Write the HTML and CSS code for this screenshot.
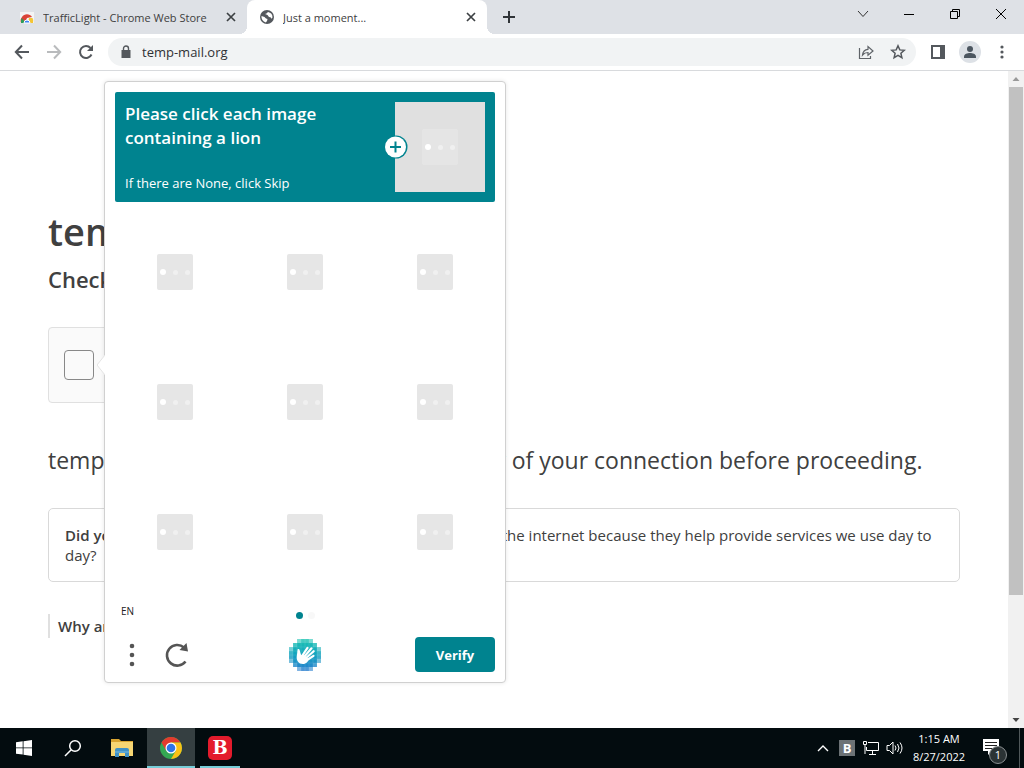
FILE: index.html
```html
<!DOCTYPE html>
<html lang="en">
<head>
<meta charset="UTF-8">
<meta name="viewport" content="width=device-width, initial-scale=1.0">
<title>Just a moment...</title>
<link rel="stylesheet" href="styles.css">
</head>
<body>
<div class="desktop">

  <!-- Tab strip -->
  <header class="tabstrip">
    <div class="tab">
      <svg class="favicon" width="16" height="16" viewBox="0 0 16 16">
        <path d="M1 3h14v11H1z" fill="#f4f4f4"/>
        <path d="M5 1h6v2H5z" fill="#e3e3e3"/>
        <path d="M2 14a6 6 0 0 1 1-6 6 6 0 0 1 10 0l-5 1-2 5z" fill="#db4437"/>
        <path d="M9 14l1-5h3.500a6 6 0 0 1 .5 5z" fill="#f4c534"/>
        <path d="M2 14a6 6 0 0 1 .8-5L7 14z" fill="#2f9d57"/>
        <path d="M5 14a3 3 0 0 1 6 0z" fill="#4285f4" stroke="#fff"/>
      </svg>
      <span class="tab-title">TrafficLight - Chrome Web Store</span>
      <button class="tab-close" aria-label="Close tab">
        <svg width="16" height="16" viewBox="0 0 16 16"><path d="M4 4l8 8M12 4l-8 8" stroke="#3c4043" stroke-width="1.700"/></svg>
      </button>
    </div>
    <div class="tab tab-active">
      <svg class="favicon" width="16" height="16" viewBox="0 0 16 16">
        <circle cx="8" cy="8" r="7" fill="#54585d"/>
        <path d="M2.500 7l3 1 1.500 1.500 1.500.5-.5 2-1.200 1.500A5.800 5.800 0 0 1 2.500 7z" fill="#fff"/>
        <path d="M9 3L7.500 4.500l-1.500.5 2.500 1 1.500 1.900 1.500.3 1 1.600 1-1.400A5.500 5.500 0 0 0 9 3z" fill="#fff"/>
      </svg>
      <span class="tab-title">Just a moment...</span>
      <button class="tab-close" aria-label="Close tab">
        <svg width="16" height="16" viewBox="0 0 16 16"><path d="M4 4l8 8M12 4l-8 8" stroke="#3c4043" stroke-width="1.700"/></svg>
      </button>
    </div>
    <button class="new-tab" aria-label="New tab">
      <svg width="14" height="14" viewBox="0 0 14 14"><path d="M7 1v12M1 7h12" stroke="#303438" stroke-width="2"/></svg>
    </button>
    <div class="window-controls">
      <button aria-label="Search tabs"><svg width="12" height="12" viewBox="0 0 12 12"><path d="M1 3l5 5.500L11 3" fill="none" stroke="#333"/></svg></button>
      <button aria-label="Minimize"><svg width="12" height="12" viewBox="0 0 12 12"><path d="M1 6.500h10" stroke="#000"/></svg></button>
      <button aria-label="Restore"><svg width="12" height="12" viewBox="0 0 12 12"><path d="M1.500 3.500h7v7h-7zM3.500 3.500v-2h7v7h-2" fill="none" stroke="#000"/></svg></button>
      <button aria-label="Close"><svg width="12" height="12" viewBox="0 0 12 12"><path d="M1 1l10 10M11 1L1 11" stroke="#000"/></svg></button>
    </div>
  </header>

  <!-- Toolbar -->
  <nav class="toolbar">
    <button class="tool" aria-label="Back"><svg width="16" height="16" viewBox="0 0 16 16"><path d="M15 8H2M8 1.500L1.800 8 8 14.500" fill="none" stroke="#54585d" stroke-width="2"/></svg></button>
    <button class="tool" aria-label="Forward"><svg width="16" height="16" viewBox="0 0 16 16"><path d="M1 8h13M8 1.500L14.200 8 8 14.500" fill="none" stroke="#b9bbbd" stroke-width="2"/></svg></button>
    <button class="tool" aria-label="Reload"><svg width="16" height="16" viewBox="0 0 16 16"><path d="M13.500 10.500A6 6 0 1 1 12.500 4" fill="none" stroke="#54585d" stroke-width="2"/><path d="M15 1v6H9z" fill="#54585d"/></svg></button>
    <div class="omnibox">
      <svg width="12" height="14" viewBox="0 0 12 14"><path d="M1.500 5h9v8h-9z" fill="#54585d"/><path d="M3.500 6V3.500a2.500 2.500 0 0 1 5 0V6" fill="none" stroke="#54585d" stroke-width="1.400"/></svg>
      <input class="url" type="text" value="temp-mail.org" aria-label="Address">
      <button class="tool" aria-label="Share"><svg width="16" height="16" viewBox="0 0 16 16"><path d="M1.500 4v10.500h11V12M4.500 11c.4-4 2.500-5.500 5.500-5.700V2.500L15 7l-5 4.300V8.500c-2.500 0-4 .7-5.500 2.500z" fill="none" stroke="#5f6368" stroke-width="1.200"/></svg></button>
      <button class="tool" aria-label="Bookmark"><svg width="16" height="16" viewBox="0 0 16 16"><path d="M8 1.800l1.800 4.100 4.500.4-3.400 3 1 4.400L8 11.400l-3.900 2.300 1-4.400-3.400-3 4.500-.4z" fill="none" stroke="#54585d" stroke-width="1.500"/></svg></button>
    </div>
    <button class="tool" aria-label="Side panel"><svg width="16" height="16" viewBox="0 0 16 16"><path d="M2 2h12v12H2z" fill="none" stroke="#54585d" stroke-width="2"/><path d="M10 2h4v12h-4z" fill="#54585d"/></svg></button>
    <button class="tool" aria-label="Profile"><svg width="22" height="22" viewBox="0 0 22 22"><circle cx="11" cy="11" r="11" fill="#dde1e6"/><circle cx="11" cy="8" r="3" fill="#4c5660"/><path d="M5 17v-1.500C5 13 8.500 12 11 12s6 1 6 3.500V17z" fill="#4c5660"/></svg></button>
    <button class="tool" aria-label="Menu"><svg width="4" height="16" viewBox="0 0 4 16"><circle cx="2" cy="3" r="1.600" fill="#54585d"/><circle cx="2" cy="8" r="1.600" fill="#54585d"/><circle cx="2" cy="13" r="1.600" fill="#54585d"/></svg></button>
  </nav>

  <div class="viewport">
    <main class="page">
      <h1>temp-mail.org</h1>
      <h2>Checking if the site connection is secure</h2>
      <div class="widget">
        <input type="checkbox" id="human" class="human-check">
        <label for="human">I am human</label>
      </div>
      <p class="lead">temp-mail.org needs to review the security of your connection before proceeding.</p>
      <p class="fact"><strong>Did you know</strong> not all bots are bad? Some bots are essential to the internet because they help provide services we use day to day?</p>
      <p class="why">Why am I seeing this page?</p>

      <!-- Challenge popup -->
      <section class="challenge">
        <svg class="pointer" width="8" height="20" viewBox="0 0 8 20"><path d="M8 0L0 10l8 10z" fill="#fff"/><path d="M8 0L0 10l8 10" fill="none" stroke="#e4e4e4"/></svg>
        <div class="prompt">
          <div class="prompt-text">
            <h3>Please click each image containing a lion</h3>
            <p>If there are None, click Skip</p>
          </div>
          <div class="example">
            <div class="loader"><i></i><i></i><i></i></div>
            <svg class="plus" width="24" height="24" viewBox="0 0 24 24"><circle cx="12" cy="12" r="11.500" fill="#00838f"/><circle cx="11.500" cy="12" r="10.500" fill="#fff"/><path d="M11.500 6.500v11M6 12h11" stroke="#00838f" stroke-width="2"/></svg>
          </div>
        </div>
        <div class="tiles">
          <div class="tile"><div class="loader"><i></i><i></i><i></i></div></div>
          <div class="tile"><div class="loader"><i></i><i></i><i></i></div></div>
          <div class="tile"><div class="loader"><i></i><i></i><i></i></div></div>
          <div class="tile"><div class="loader"><i></i><i></i><i></i></div></div>
          <div class="tile"><div class="loader"><i></i><i></i><i></i></div></div>
          <div class="tile"><div class="loader"><i></i><i></i><i></i></div></div>
          <div class="tile"><div class="loader"><i></i><i></i><i></i></div></div>
          <div class="tile"><div class="loader"><i></i><i></i><i></i></div></div>
          <div class="tile"><div class="loader"><i></i><i></i><i></i></div></div>
        </div>
        <div class="status">
          <button class="lang">EN</button>
          <div class="crumbs"><i class="on"></i><i></i></div>
        </div>
        <div class="actions">
          <div class="left-actions">
            <button aria-label="More"><svg width="6" height="24" viewBox="0 0 6 24"><circle cx="3" cy="3" r="2.300" fill="#555"/><circle cx="3" cy="12" r="2.300" fill="#555"/><circle cx="3" cy="21" r="2.300" fill="#555"/></svg></button>
            <button aria-label="Refresh"><svg width="24" height="26" viewBox="0 0 24 26"><path d="M20.500 19.500A10.300 10.300 0 1 1 19 5.500" fill="none" stroke="#555" stroke-width="2.600"/><path d="M21.500 1l1.500 8.500-8.500-1.500z" fill="#555"/></svg></button>
          </div>
          <svg width="32" height="32" viewBox="0 0 32 32">
            <defs>
              <linearGradient id="aqua" x1="0" y1="0" x2="0" y2="1">
                <stop offset="0" stop-color="#1fc5b3"/>
                <stop offset=".5" stop-color="#12a2bf"/>
                <stop offset="1" stop-color="#2c7fd0"/>
              </linearGradient>
            </defs>
            <path d="M8 0h16v4h4v4h4v16h-4v4h-4v4H8v-4H4v-4H0V8h4V4h4z" fill="url(#aqua)"/>
            <path d="M8 0h4v4H8zM20 0h4v4h-4zM0 8h4v4H0zM28 8h4v4h-4zM0 20h4v4H0zM28 20h4v4h-4zM8 28h4v4H8zM20 28h4v4h-4z" fill="#fff" opacity=".4"/>
            <path d="M0 12h4v8H0zM28 12h4v8h-4zM12 0h8v4h-8zM12 28h8v4h-8zM4 4h4v4H4zM24 4h4v4h-4zM4 24h4v4H4zM24 24h4v4h-4z" fill="#fff" opacity=".18"/>
            <path d="M8 0v32M16 0v32M24 0v32M4 4v24M12 0v32M20 0v32M28 4v24M0 8h32M0 16h32M0 24h32M0 12h32M0 20h32" stroke="#fff" stroke-width=".5" opacity=".2"/>
            <path d="M9.500 11l2 7M13 17l5.500-8.200M15 18l7.500-8.700M17 19l7.700-6.800M18 21l6.500-4.200" stroke="#fff" stroke-width="2.200" stroke-linecap="round"/>
            <path d="M8.500 11.500l3.500 5 2-1 5.500 4.500c0 2.500-2.500 5-5.500 5-4.500 0-6.500-3.500-6.300-7z" fill="#fff"/>
          </svg>
          <button class="verify">Verify</button>
        </div>
      </section>
    </main>
    <div class="scrollbar">
      <svg width="16" height="16" viewBox="0 0 16 16"><path d="M4.500 10L8 6l3.500 4z" fill="#999"/></svg>
      <div class="thumb"></div>
      <svg width="16" height="16" viewBox="0 0 16 16"><path d="M4.500 6L8 10l3.500-4z" fill="#444"/></svg>
    </div>
  </div>

  <!-- Windows taskbar -->
  <footer class="taskbar">
    <div class="apps">
      <button aria-label="Start"><svg width="16" height="16" viewBox="0 0 16 16"><path d="M0 2.200L6.700 1.300v6.200H0zM7.500 1.200L16 0v7.500H7.500zM0 8.300h6.700v6.300L0 13.700zM7.500 8.300H16V16l-8.500-1.200z" fill="#fff"/></svg></button>
      <button aria-label="Search"><svg width="18" height="18" viewBox="0 0 18 18"><circle cx="11" cy="7" r="5.300" fill="none" stroke="#fff" stroke-width="1.500"/><path d="M7.200 10.800L1 17" stroke="#fff" stroke-width="1.500"/></svg></button>
      <button aria-label="File Explorer"><svg width="22" height="20" viewBox="0 0 22 20"><path d="M0 1h8l2 2h12v5H0z" fill="#d9a531"/><path d="M0 4h22v14H0z" fill="#f6d673"/><path d="M4 19v-7q0-2 2-2h10q2 0 2 2v7h-4v-4H8v4z" fill="#3f91c6"/><path d="M4 14h14" stroke="#7bbbe0"/></svg></button>
      <button class="open focused" aria-label="Google Chrome"><svg width="24" height="24" viewBox="0 0 24 24"><circle cx="12" cy="12" r="11" fill="#34a853"/><path d="M2.500 6.500A11 11 0 0 1 21.500 6.500H12L7.200 14.700z" fill="#e33b2e"/><path d="M12 6.500h9.500A11 11 0 0 1 12 23l4.800-8.200z" fill="#fbc116"/><circle cx="12" cy="12" r="5.500" fill="#fff"/><circle cx="12" cy="12" r="4.300" fill="#2f74e8"/></svg></button>
      <button class="open" aria-label="Bitdefender"><span class="bd">B</span></button>
    </div>
    <div class="tray">
      <button aria-label="Hidden icons"><svg width="12" height="8" viewBox="0 0 12 8"><path d="M1 7l5-5 5 5" fill="none" stroke="#fff" stroke-width="1.400"/></svg></button>
      <button aria-label="Bitdefender tray"><span class="bd-small">B</span></button>
      <button aria-label="Network"><svg width="18" height="16" viewBox="0 0 18 16"><path d="M6 2.500h10.500v8H4.500V7M10.500 10.500v4M7 14.500h7M1.500 1.500h3v3h-3zM3 4.500V14" fill="none" stroke="#fff"/></svg></button>
      <button aria-label="Volume"><svg width="18" height="16" viewBox="0 0 18 16"><path d="M1 5.500h2.500L7 2v12l-3.500-3.500H1zM9 5.500q2 2.500 0 5M11.500 4q3 4 0 8M14 2.500q4 5.500 0 11" fill="none" stroke="#fff"/></svg></button>
      <div class="clock"><span>1:15 AM</span><span>8/27/2022</span></div>
      <button class="notif" aria-label="Notifications">
        <svg width="24" height="24" viewBox="0 0 24 24"><path d="M0 3h16v12H9l-4 4v-4H0z" fill="#fff"/><path d="M2 6.500h12M2 9.500h12M2 12.500h8" stroke="#222"/></svg>
        <span class="badge">1</span>
      </button>
      <div class="peek"></div>
    </div>
  </footer>
</div>
</body>
</html>
```

FILE: styles.css
```css
* {
  box-sizing: border-box;
}
body {
  margin: 0;
  font-family: "Open Sans", "Noto Sans", sans-serif;
  color: #404040;
}
h1, h2, h3, p {
  margin: 0;
}
button {
  display: flex;
  align-items: center;
  justify-content: center;
  padding: 0;
  border: 0;
  background: none;
  font-family: inherit;
}
svg {
  display: block;
  flex: none;
}
.desktop {
  display: flex;
  flex-direction: column;
  height: 100vh;
  overflow: hidden;
}

/* tabs */
.tabstrip {
  display: flex;
  flex: none;
  height: 34px;
  padding-left: 7px;
  background: #dee1e6;
}
.tab {
  display: flex;
  align-items: center;
  gap: 8px;
  width: 240px;
  padding: 0 8px 0 12px;
  font-size: 11px;
}
.tab-active {
  position: relative;
  background: #fff;
  border-radius: 8px 8px 0 0;
}
.tab-active::before,
.tab-active::after {
  content: "";
  position: absolute;
  bottom: 0;
  width: 8px;
  height: 8px;
}
.tab-active::before {
  right: 100%;
  background: radial-gradient(circle at 0 0, #dee1e6 8px, #fff 8px);
}
.tab-active::after {
  left: 100%;
  background: radial-gradient(circle at 100% 0, #dee1e6 8px, #fff 8px);
}
.tab-title {
  flex: 1;
  white-space: nowrap;
  overflow: hidden;
}
.tab-close {
  width: 16px;
  height: 16px;
}
.new-tab {
  width: 28px;
  margin-left: 8px;
}
.window-controls {
  display: flex;
  height: 28px;
  margin-left: auto;
}
.window-controls button {
  width: 46px;
}

/* toolbar */
.toolbar {
  display: flex;
  flex: none;
  align-items: center;
  gap: 4px;
  height: 37px;
  padding: 0 8px;
  background: #fff;
  border-bottom: 1px solid #d8dadd;
}
.tool {
  flex: none;
  width: 28px;
  height: 28px;
}
.omnibox {
  display: flex;
  flex: 1;
  align-items: center;
  gap: 4px;
  height: 28px;
  margin: 0 4px;
  padding: 0 4px 0 12px;
  border-radius: 14px;
  background: #f1f3f4;
}
.url {
  flex: 1;
  min-width: 0;
  padding: 0 6px;
  border: 0;
  outline: 0;
  background: none;
  font-family: inherit;
  font-size: 13px;
  color: #303134;
}

/* page */
.viewport {
  display: flex;
  flex: 1;
  min-height: 0;
  background: #fff;
}
.page {
  position: relative;
  flex: 1;
  padding: 130px 48px 0;
}
h1 {
  font-size: 38px;
  font-weight: 600;
  line-height: 60px;
}
h2 {
  font-size: 22px;
  font-weight: 600;
  line-height: 36px;
}
.widget {
  display: flex;
  align-items: center;
  gap: 16px;
  width: 300px;
  height: 76px;
  margin: 30px 0 40px;
  padding: 0 15px;
  border: 1px solid #e0e0e0;
  border-radius: 4px;
  background: #fafafa;
  font-size: 14px;
}
.human-check {
  appearance: none;
  width: 30px;
  height: 30px;
  margin: 0;
  border: 1px solid #888;
  border-radius: 4px;
  background: #fafafa;
}
.lead {
  font-size: 23px;
  line-height: 34px;
}
.fact {
  margin: 31px 0 32px;
  padding: 16px;
  border: 1px solid #d9d9d9;
  border-radius: 5px;
  font-size: 15px;
  line-height: 20px;
}
.fact strong,
.why {
  font-weight: 600;
}
.why {
  padding-left: 8px;
  border-left: 2px solid #e0e0e0;
  font-size: 15px;
  line-height: 24px;
}

/* challenge popup */
.challenge {
  position: absolute;
  top: 10px;
  left: 104px;
  width: 402px;
  padding: 10px;
  border: 1px solid #d0d0d0;
  border-radius: 4px;
  background: #fff;
  box-shadow: 0 0 4px rgba(0, 0, 0, 0.1);
}
.pointer {
  position: absolute;
  top: 273px;
  left: -8px;
}
.prompt {
  display: flex;
  justify-content: space-between;
  height: 110px;
  padding: 10px;
  border-radius: 2px;
  background: #00838f;
  color: #fff;
}
.prompt-text {
  display: flex;
  flex-direction: column;
  justify-content: space-between;
  width: 220px;
}
.prompt h3 {
  font-size: 17px;
  font-weight: 600;
  line-height: 24px;
}
.prompt p {
  font-size: 13px;
  line-height: 18px;
}
.example {
  position: relative;
  display: flex;
  align-items: center;
  justify-content: center;
  width: 90px;
  background: #e0e0e0;
}
.plus {
  position: absolute;
  top: 33px;
  left: -11px;
}
.tiles {
  display: grid;
  grid-template-columns: repeat(3, 1fr);
  grid-auto-rows: 120px;
  gap: 10px;
  margin-top: 10px;
}
.tile {
  display: flex;
  align-items: center;
  justify-content: center;
}
.loader {
  display: flex;
  align-items: center;
  justify-content: space-between;
  width: 36px;
  height: 36px;
  padding: 0 3px;
  border-radius: 2px;
  background: #e6e6e6;
}
.loader i {
  width: 5px;
  height: 5px;
  border-radius: 50%;
  background: #f0f0f0;
}
.loader i:first-child {
  width: 6px;
  height: 6px;
  background: #fff;
}
.example .loader {
  background: #e5e5e5;
}
.status {
  display: grid;
  grid-template-columns: 1fr auto 1fr;
  align-items: end;
  height: 40px;
  padding: 0 6px 13px;
}
.lang {
  justify-self: start;
  font-size: 10px;
  line-height: 16px;
  color: #222;
}
.crumbs {
  display: flex;
  gap: 5px;
}
.crumbs i {
  width: 7px;
  height: 7px;
  border-radius: 50%;
  background: #f8f8f8;
}
.crumbs .on {
  background: #00838f;
}
.actions {
  display: grid;
  grid-template-columns: 1fr auto 1fr;
  align-items: center;
  margin-top: 5px;
}
.left-actions {
  display: flex;
  gap: 30px;
  padding-left: 14px;
}
.verify {
  justify-self: end;
  width: 80px;
  height: 35px;
  border-radius: 4px;
  background: #00838f;
  color: #fff;
  font-size: 13px;
  font-weight: 700;
}

/* page scrollbar */
.scrollbar {
  display: flex;
  flex-direction: column;
  width: 16px;
  background: #f1f1f1;
}
.thumb {
  height: 508px;
  margin: 0 1px auto;
  background: #c1c1c1;
}

/* taskbar */
.taskbar {
  display: flex;
  flex: none;
  justify-content: space-between;
  height: 40px;
  background: #030c0f;
  color: #fff;
}
.apps {
  display: flex;
  gap: 1px;
}
.apps button {
  width: 48px;
}
.apps .open {
  background: linear-gradient(#76cdd8, #76cdd8) bottom / 40px 2px no-repeat;
}
.apps .focused {
  background: linear-gradient(#76cdd8, #76cdd8) bottom / 48px 2px no-repeat #353f41;
}
.bd {
  width: 24px;
  border-radius: 5px;
  background: #e31b2c;
  color: #fff;
  font-family: "DejaVu Serif", serif;
  font-size: 18px;
  font-weight: 700;
  line-height: 24px;
}
.tray {
  display: flex;
}
.tray button {
  width: 24px;
}
.bd-small {
  width: 16px;
  background: #6c7275;
  color: #fff;
  font-size: 13px;
  font-weight: 700;
  line-height: 16px;
}
.clock {
  display: flex;
  flex-direction: column;
  align-items: center;
  justify-content: center;
  width: 64px;
  font-size: 11px;
  line-height: 18px;
}
.tray .notif {
  position: relative;
  width: 48px;
}
.badge {
  position: absolute;
  right: 12px;
  bottom: 4px;
  width: 18px;
  border: 1px solid #8a8f91;
  border-radius: 50%;
  background: #2b3335;
  color: #fff;
  font-size: 11px;
  line-height: 16px;
}
.peek {
  width: 5px;
  border-left: 1px solid #50585a;
}
```
